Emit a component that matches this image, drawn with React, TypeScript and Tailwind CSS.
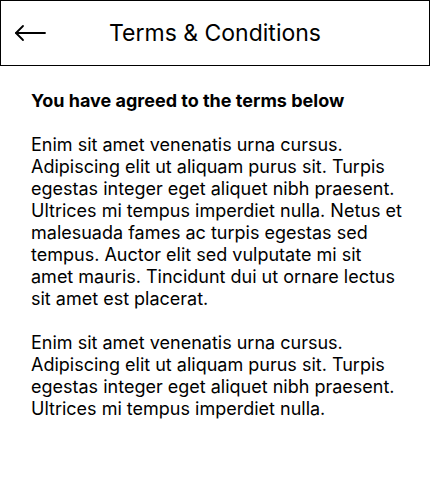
export default function App() {
  return (
    <div className="w-[430px] h-[491px] bg-white text-black font-['Inter',sans-serif]">
      <header className="relative h-[66px] border border-black flex items-center justify-center">
        <button className="absolute left-[12px] top-1/2 -translate-y-1/2">
          <svg width="34" height="20" viewBox="0 0 34 20" fill="none" stroke="black" strokeWidth="1.8" strokeLinecap="round" strokeLinejoin="round">
            <path d="M32 10H3" />
            <path d="M10 3L3 10L10 17" />
          </svg>
        </button>
        <h1 className="text-[23px] leading-none">Terms &amp; Conditions</h1>
      </header>

      <main className="pl-[31px] pr-[24px] pt-[24px]">
        <h2 className="text-[18px] font-bold leading-[22px]">You have agreed to the terms below</h2>
        <div className="mt-[22px] text-[18px] leading-[22px] space-y-[22px]">
          <p>
            Enim sit amet venenatis urna cursus. Adipiscing elit ut aliquam purus sit. Turpis egestas integer eget
            aliquet nibh praesent. Ultrices mi tempus imperdiet nulla. Netus et malesuada fames ac turpis egestas sed
            tempus. Auctor elit sed vulputate mi sit amet mauris. Tincidunt dui ut ornare lectus sit amet est placerat.
          </p>
          <p>
            Enim sit amet venenatis urna cursus. Adipiscing elit ut aliquam purus sit. Turpis egestas integer eget
            aliquet nibh praesent. Ultrices mi tempus imperdiet nulla.
          </p>
        </div>
      </main>
    </div>
  );
}
